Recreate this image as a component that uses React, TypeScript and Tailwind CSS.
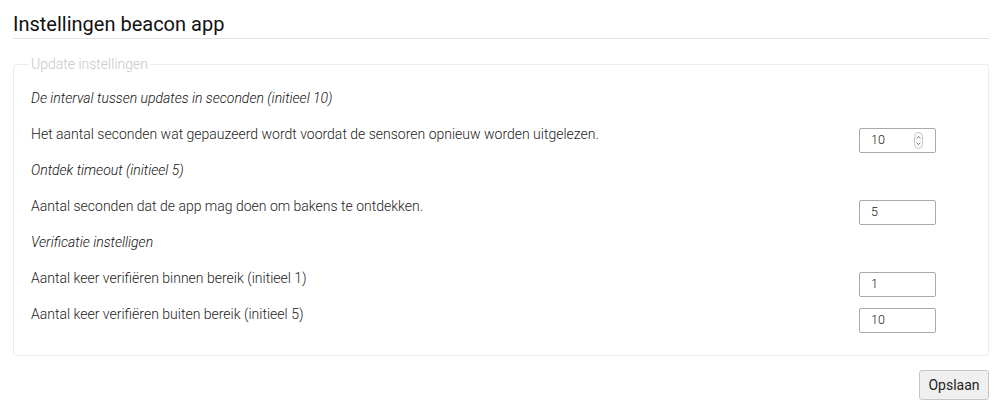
import React from "react";

function Field({ value, spinner }: { value: string; spinner?: boolean }) {
  return (
    <div className="mt-[12px] mr-[35px] flex h-[25px] w-[77px] shrink-0 items-center justify-between rounded-[2px] border border-[#a9a9a9] bg-white pl-[11px] pr-[12px] text-[12.5px] font-light text-[#111]">
      <span>{value}</span>
      {spinner && (
        <svg width="9" height="17" viewBox="0 0 9 17" className="block">
          <rect x="0.5" y="0.5" width="8" height="16" rx="4" fill="#fafafa" stroke="#c8c8c8" />
          <path d="M2.7 6.2 L4.5 4.4 L6.3 6.2" fill="none" stroke="#666" strokeWidth="0.9" />
          <path d="M2.7 10.8 L4.5 12.6 L6.3 10.8" fill="none" stroke="#666" strokeWidth="0.9" />
        </svg>
      )}
    </div>
  );
}

function Header({ children }: { children: React.ReactNode }) {
  return <div className="h-[36px] leading-[36px] italic text-[#111]">{children}</div>;
}

function Row({ label, value, spinner }: { label: string; value: string; spinner?: boolean }) {
  return (
    <div className="flex h-[36px] items-start justify-between">
      <div className="leading-[36px] text-[#222]">{label}</div>
      <Field value={value} spinner={spinner} />
    </div>
  );
}

export default function App() {
  return (
    <div
      className="min-h-[412px] bg-white pl-[13px] pr-[12px] pt-[10px] text-[14px] font-light"
      style={{ fontFamily: "Roboto, 'Liberation Sans', sans-serif" }}
    >
      <h1 className="h-[29px] border-b border-[#e2e2e2] text-[20px] font-normal leading-[28px] text-[#111]">
        Instellingen beacon app
      </h1>
      <fieldset className="mt-[17px] rounded-[3px] border border-[#ececec] pb-[23px] pl-[17px] pr-[17px] pt-[8px]">
        <legend className="-ml-[2px] px-[2px] text-[14px] leading-[16px] text-[#c8c8c8]">
          Update instellingen
        </legend>
        <Header>De interval tussen updates in seconden (initieel 10)</Header>
        <Row
          label="Het aantal seconden wat gepauzeerd wordt voordat de sensoren opnieuw worden uitgelezen."
          value="10"
          spinner
        />
        <Header>Ontdek timeout (initieel 5)</Header>
        <Row label="Aantal seconden dat de app mag doen om bakens te ontdekken." value="5" />
        <Header>Verificatie instelligen</Header>
        <Row label="Aantal keer verifiëren binnen bereik (initieel 1)" value="1" />
        <Row label="Aantal keer verifiëren buiten bereik (initieel 5)" value="10" />
      </fieldset>
      <div className="mt-[14px] flex justify-end">
        <button className="h-[30px] w-[70px] rounded-[3px] border border-[#c6c6c6] bg-[#efefef] text-[14px] font-normal text-[#222]">
          Opslaan
        </button>
      </div>
    </div>
  );
}
